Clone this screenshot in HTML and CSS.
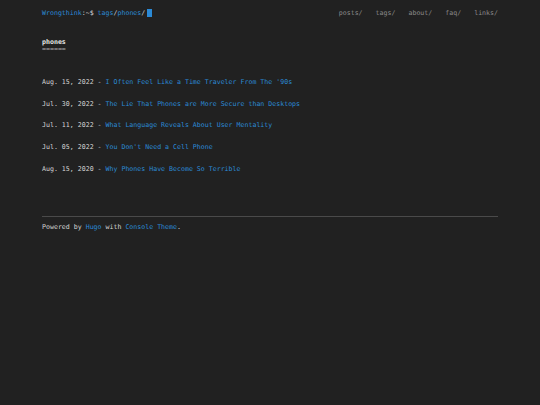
FILE: index.html
```
<!DOCTYPE html>
<html lang="en">
<head>
<meta charset="utf-8">
<title>phones</title>
<link rel="stylesheet" href="styles.css">
</head>
<body>
<div class="page">
  <header class="top">
    <div class="prompt"><a class="host" href="#">Wrongthink</a><span class="sep">:~$ </span><a class="path" href="#">tags</a><span class="sep">/</span><a class="path" href="#">phones</a><span class="sep">/</span><span class="cursor"></span></div>
    <nav class="nav">
      <a href="#">posts/</a>
      <a href="#">tags/</a>
      <a href="#">about/</a>
      <a href="#">faq/</a>
      <a href="#">links/</a>
    </nav>
  </header>
  <main class="main">
    <h1 class="title">phones</h1>
    <div class="underline">======</div>
    <ul class="posts">
      <li><span class="date">Aug. 15, 2022 - </span><a href="#">I Often Feel Like a Time Traveler From The '90s</a></li>
      <li><span class="date">Jul. 30, 2022 - </span><a href="#">The Lie That Phones are More Secure than Desktops</a></li>
      <li><span class="date">Jul. 11, 2022 - </span><a href="#">What Language Reveals About User Mentality</a></li>
      <li><span class="date">Jul. 05, 2022 - </span><a href="#">You Don't Need a Cell Phone</a></li>
      <li><span class="date">Aug. 15, 2020 - </span><a href="#">Why Phones Have Become So Terrible</a></li>
    </ul>
  </main>
  <footer class="footer">
    Powered by <a href="#">Hugo</a> with <a href="#">Console Theme</a>.
  </footer>
</div>
</body>
</html>
```

FILE: styles.css
```
html, body {
  margin: 0;
  padding: 0;
  background: #212121;
}
body {
  font-family: "DejaVu Sans Mono", "Liberation Mono", monospace;
  font-size: 6.6px;
  color: #d4d4d4;
}
a {
  color: #2b8ad6;
  text-decoration: none;
}
.page {
  padding: 8px 42px 0;
}
.top {
  display: flex;
  justify-content: space-between;
  align-items: center;
  height: 10px;
  line-height: 10px;
}
.prompt {
  display: flex;
  align-items: center;
  white-space: pre;
}
.sep {
  color: #d4d4d4;
}
.cursor {
  display: inline-block;
  width: 5px;
  height: 8px;
  margin-left: 2px;
  background: #2b8ad6;
}
.nav {
  display: flex;
  gap: 13px;
}
.nav a {
  color: #8a8a8a;
}
.main {
  padding-top: 21px;
}
.title {
  margin: 0;
  font-size: 6.6px;
  font-weight: bold;
  line-height: 7px;
  color: #e6e6e6;
}
.underline {
  line-height: 6px;
  color: #b0b0b0;
}
.posts {
  list-style: none;
  margin: 26px 0 0;
  padding: 0;
}
.posts li {
  line-height: 8px;
  margin-bottom: 13.7px;
}
.date {
  white-space: pre;
  color: #d4d4d4;
}
.footer {
  margin-top: 43px;
  border-top: 1px solid #4a4a4a;
  padding-top: 6px;
  line-height: 8px;
}
```
